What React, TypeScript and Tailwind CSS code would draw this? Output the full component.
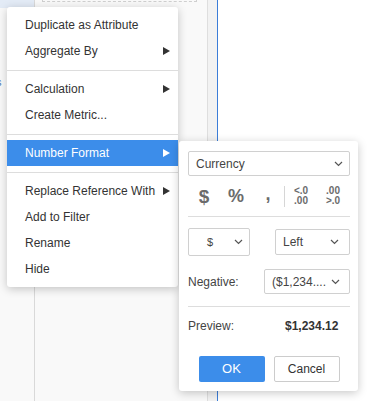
import React from 'react';

const font = { fontFamily: '"Liberation Sans", Arial, sans-serif' };

const Arrow = ({ white }: { white?: boolean }) => (
  <svg width="7" height="8" viewBox="0 0 7 8">
    <polygon points="0,0 7,4 0,8" fill={white ? '#ffffff' : '#333333'} />
  </svg>
);

const Chevron = () => (
  <svg width="9" height="6" viewBox="0 0 9 6" className="shrink-0">
    <polyline points="1,1 4.5,4.5 8,1" fill="none" stroke="#555" strokeWidth="1.2" />
  </svg>
);

const Item = ({ label, sub, active }: { label: string; sub?: boolean; active?: boolean }) => (
  <div
    className={`h-[26px] flex items-center justify-between pl-[18px] pr-[8px] ${
      active ? 'bg-[#3c8dea] text-white' : 'text-[#333]'
    }`}
  >
    <span>{label}</span>
    {sub && <Arrow white={active} />}
  </div>
);

const Divider = () => <div className="h-px bg-[#dddddd] mt-[6px] mb-[5px]" />;

// two stacked lines, like the increase / decrease decimals buttons
const Decimal = ({ top, bottom }: { top: string; bottom: string }) => (
  <div className="w-[32px] flex flex-col items-center text-[10px] font-bold leading-[10px] text-[#6b6b6b]">
    <span>{top}</span>
    <span>{bottom}</span>
  </div>
);

export default function App() {
  return (
    <div className="relative w-[370px] h-[401px] overflow-hidden bg-white text-[12px]" style={font}>
      {/* page behind the menus */}
      <div className="flex h-full">
        <div className="w-[35px] border-r border-[#d9d9d9] bg-[#f9f9f9] flex flex-col">
          <div className="h-[8px] bg-[#e3ebf6]" />
          <span className="mt-[66px] -ml-[4px] text-[11px] text-[#4a78b8]">s</span>
        </div>
        <div className="w-[173px] border-r border-[#dedede] bg-[#f9f9f9]">
          <div className="-mt-[40px] ml-[7px] w-[155px] h-[42px] border border-dashed border-[#cfcfcf]" />
        </div>
        <div className="w-[9px] bg-[#f2f2f2]" />
        <div className="flex-1 border-l border-[#3b7dd8] bg-white" />
      </div>

      {/* context menu */}
      <div className="absolute left-[7px] top-[7px] w-[171px] bg-white rounded-[3px] py-[5px] shadow-[0_2px_10px_rgba(0,0,0,0.22)]">
        <Item label="Duplicate as Attribute" />
        <Item label="Aggregate By" sub />
        <Divider />
        <Item label="Calculation" sub />
        <Item label="Create Metric..." />
        <Divider />
        <Item label="Number Format" sub active />
        <Divider />
        <Item label="Replace Reference With" sub />
        <Item label="Add to Filter" />
        <Item label="Rename" />
        <Item label="Hide" />
      </div>

      {/* number format panel */}
      <div className="absolute left-[179px] top-[141px] w-[179px] bg-white rounded-[3px] pt-[10px] pb-[9px] pl-[9px] pr-[8px] shadow-[0_2px_10px_rgba(0,0,0,0.22)] text-[#333]">
        <div className="h-[25px] border border-[#d0d0d0] rounded-[2px] flex items-center justify-between pl-[7px] pr-[6px] text-[#444]">
          <span>Currency</span>
          <Chevron />
        </div>

        <div className="h-[40px] flex items-center text-[#6b6b6b] font-bold">
          <div className="w-[32px] text-center text-[19px] leading-none">$</div>
          <div className="w-[32px] text-center text-[18px] leading-none">%</div>
          <div className="w-[32px] text-center text-[18px] leading-none -mt-[4px]">,</div>
          <div className="w-px h-[21px] bg-[#d6d6d6]" />
          <Decimal top="<.0" bottom=".00" />
          <Decimal top=".00" bottom=">.0" />
        </div>

        <div className="h-px bg-[#dddddd]" />

        <div className="mt-[11px] flex items-start justify-between">
          <div className="w-[62px] h-[28px] border border-[#d0d0d0] rounded-[2px] flex items-center justify-between pl-[18px] pr-[6px] text-[11px] text-[#444]">
            <span>$</span>
            <Chevron />
          </div>
          <div className="mt-[1px] w-[75px] h-[26px] border border-[#d0d0d0] rounded-[2px] flex items-center justify-between pl-[7px] pr-[10px] text-[#444]">
            <span>Left</span>
            <Chevron />
          </div>
        </div>

        <div className="mt-[13px] flex items-center justify-between">
          <span className="text-[#444]">Negative:</span>
          <div className="w-[86px] h-[25px] border border-[#d0d0d0] rounded-[2px] flex items-center justify-between pl-[7px] pr-[9px] text-[#444]">
            <span>($1,234....</span>
            <Chevron />
          </div>
        </div>

        <div className="mt-[12px] h-px bg-[#dddddd]" />

        <div className="mt-[12px] h-[14px] flex items-center">
          <span className="w-[97px] text-[#444]">Preview:</span>
          <span className="font-bold text-[#333]">$1,234.12</span>
        </div>

        <div className="mt-[23px] flex justify-center gap-[9px]">
          <button className="w-[66px] h-[26px] bg-[#3c8dea] text-white text-[13px] rounded-[2px]">OK</button>
          <button className="w-[66px] h-[26px] bg-white border border-[#cccccc] text-[#333] rounded-[2px]">
            Cancel
          </button>
        </div>
      </div>
    </div>
  );
}
